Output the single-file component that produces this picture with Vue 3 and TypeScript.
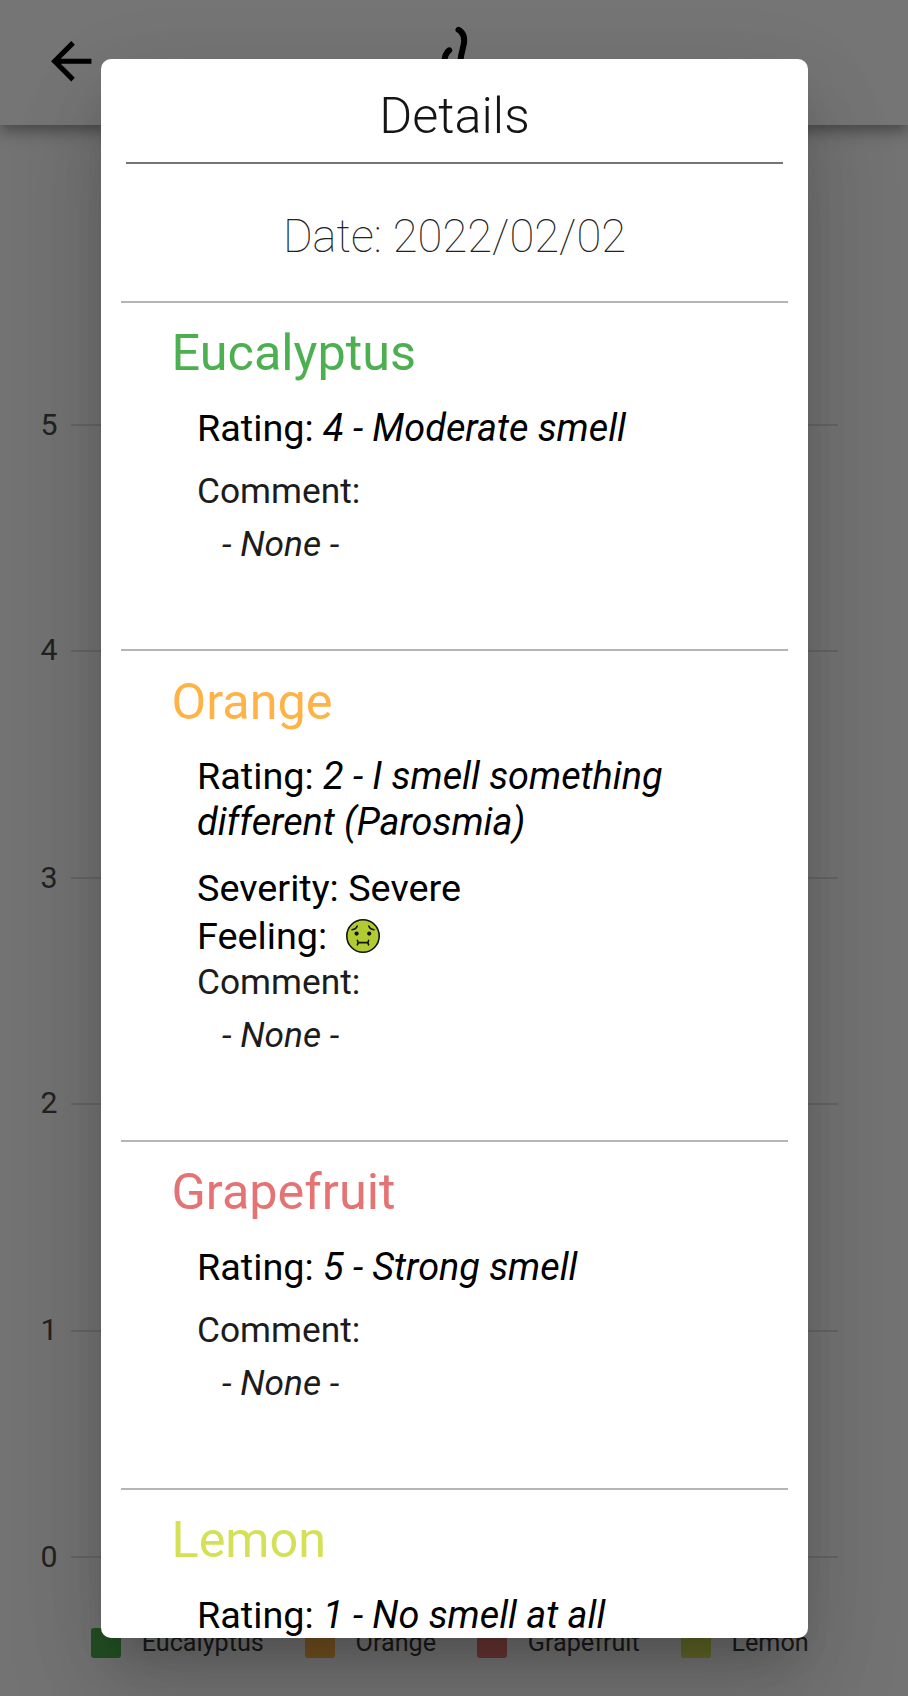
<script setup lang="ts">
interface Entry {
  name: string
  color: string
  rating: string
  severity?: string
  feeling?: boolean
}

const ticks: number[] = [5, 4, 3, 2, 1, 0]

const entries: Entry[] = [
  { name: 'Eucalyptus', color: '#4caf50', rating: '4 - Moderate smell' },
  { name: 'Orange', color: '#ffb347', rating: '2 - I smell something different (Parosmia)', severity: 'Severe', feeling: true },
  { name: 'Grapefruit', color: '#e57373', rating: '5 - Strong smell' },
  { name: 'Lemon', color: '#d4e157', rating: '1 - No smell at all' },
]
</script>

<template>
  <div class="screen">
    <header class="bar">
      <svg class="back" viewBox="0 0 24 24"><path d="M20 11H7.83l5.59-5.59L12 4l-8 8 8 8 1.41-1.41L7.83 13H20v-2z" /></svg>
      <svg class="logo" viewBox="0 0 40 80">
        <path d="M23.500 9.800C28 12.500 30.300 18 28.500 25.500C27 31 25.800 35 25 44" />
        <path d="M14.200 30.300C11 32.500 9.300 37 9.300 44" />
      </svg>
    </header>
    <main class="chart">
      <div v-for="t in ticks" :key="t" class="tick">
        <span class="num">{{ t }}</span><i class="grid-line"></i>
      </div>
    </main>
    <footer class="legend">
      <div v-for="e in entries" :key="e.name" class="key">
        <i class="swatch" :style="{ background: e.color }"></i><span>{{ e.name }}</span>
      </div>
    </footer>

    <div class="overlay">
      <section class="dialog">
        <h2 class="title">Details</h2>
        <p class="date">Date: 2022/02/02</p>
        <article v-for="e in entries" :key="e.name" class="entry">
          <h3 class="scent" :style="{ color: e.color }">{{ e.name }}</h3>
          <div class="body">
            <p class="rating">Rating: <em>{{ e.rating }}</em></p>
            <p v-if="e.severity" class="row">Severity: {{ e.severity }}</p>
            <p v-if="e.feeling" class="row feeling">
              <span>Feeling:</span>
              <svg class="face" viewBox="0 0 34 34">
                <circle cx="17" cy="17" r="16.2" fill="#b1cc33" stroke="#111" stroke-width="1.6" />
                <g fill="none" stroke="#111" stroke-width="1.6" stroke-linecap="round">
                  <path d="M6 10.700q4-.3 5.200-3.600M28 10.700q-4-.3-5.200-3.600" />
                  <path d="M12 23.600h10M11.400 21.400q1.400 2.200 0 4.400M22.600 21.400q-1.400 2.200 0 4.400" />
                </g>
                <circle cx="10.600" cy="14.600" r="2.100" fill="#111" />
                <circle cx="23.200" cy="14.600" r="2.100" fill="#111" />
              </svg>
            </p>
            <p class="comment">Comment:</p>
            <p class="none">- None -</p>
          </div>
        </article>
      </section>
    </div>
  </div>
</template>

<style>
body {
  margin: 0;
}
</style>

<style scoped>
.screen {
  position: relative;
  width: 908px;
  height: 1696px;
  overflow: hidden;
  background: #fafafa;
  font-family: Roboto, "Liberation Sans", sans-serif;
  color: #000;
}
h2, h3, p {
  margin: 0;
}
.bar {
  position: relative;
  height: 125px;
  display: flex;
  align-items: flex-start;
  background: #fff;
  box-shadow: 0 5px 10px -2.500px rgba(0, 0, 0, 0.2), 0 10px 12.600px 0 rgba(0, 0, 0, 0.14), 0 2.500px 25px 0 rgba(0, 0, 0, 0.12);
}
.back {
  width: 60.500px;
  height: 60.500px;
  margin: 31.300px 0 0 40.700px;
}
.logo {
  width: 40px;
  height: 80px;
  margin: 20px 0 0 333.800px;
  fill: none;
  stroke: #000;
  stroke-width: 6;
  stroke-linecap: round;
}
.chart {
  padding-top: 186.800px;
}
.tick {
  height: 226.400px;
  display: flex;
  align-items: center;
}
.num {
  width: 57.500px;
  margin-right: 13.500px;
  text-align: right;
  font-size: 30.300px;
  color: #4a4a4a;
}
.tick:nth-child(even) .num {
  padding-bottom: 4px;
}
.tick:nth-child(5) .num {
  padding-bottom: 2px;
}
.tick:last-child .num {
  padding-bottom: 0;
}
.grid-line {
  width: 767px;
  height: 2px;
  background: #dcdcdc;
}
.legend {
  display: flex;
  gap: 41px;
  margin: -42.200px 0 0 91px;
  font-size: 25.200px;
  color: #3a3a3a;
}
.key {
  display: flex;
  align-items: center;
  gap: 20.700px;
  height: 30px;
}
.swatch {
  width: 30px;
  height: 30px;
  border-radius: 3px;
}
.overlay {
  position: absolute;
  inset: 0;
  box-sizing: border-box;
  padding: 59px 100px 58px 101px;
  background: rgba(0, 0, 0, 0.54);
}
.dialog {
  height: 1579px;
  overflow: hidden;
  border-radius: 10px;
  background: #fff;
  box-shadow: 0 27.700px 37.800px -17.700px rgba(0, 0, 0, 0.2), 0 60.500px 95.800px 7.600px rgba(0, 0, 0, 0.1), 0 22.700px 90px 0 rgba(0, 0, 0, 0.09);
}
.title {
  height: 76.500px;
  margin: 0 25px;
  padding-top: 26.500px;
  border-bottom: 2px solid #757575;
  line-height: 60px;
  font-size: 50.400px;
  font-weight: 300;
  text-align: center;
  color: #151515;
}
.date {
  height: 137px;
  line-height: 145px;
  font-size: 45.400px;
  font-weight: 100;
  text-align: center;
  color: #222;
}
.entry {
  margin: 0 20px;
  padding: 20.300px 0 81.300px 51px;
  border-top: 2px solid #b5b5b5;
}
.scent {
  margin-left: -0.500px;
  line-height: 60px;
  font-size: 50.400px;
  font-weight: 400;
}
.body {
  padding: 21.700px 60px 0 25px;
  font-size: 37.800px;
  line-height: 46px;
}
.rating {
  margin-bottom: 18.300px;
}
.row {
  line-height: 48px;
}
.feeling {
  display: flex;
  align-items: center;
}
.face {
  width: 34px;
  height: 34px;
  margin-left: 19px;
}
.comment,
.none {
  font-size: 35.300px;
  line-height: 45.800px;
  color: #1c1c1c;
}
.none {
  margin: 7.200px 0 0 25px;
  font-style: italic;
}
</style>
